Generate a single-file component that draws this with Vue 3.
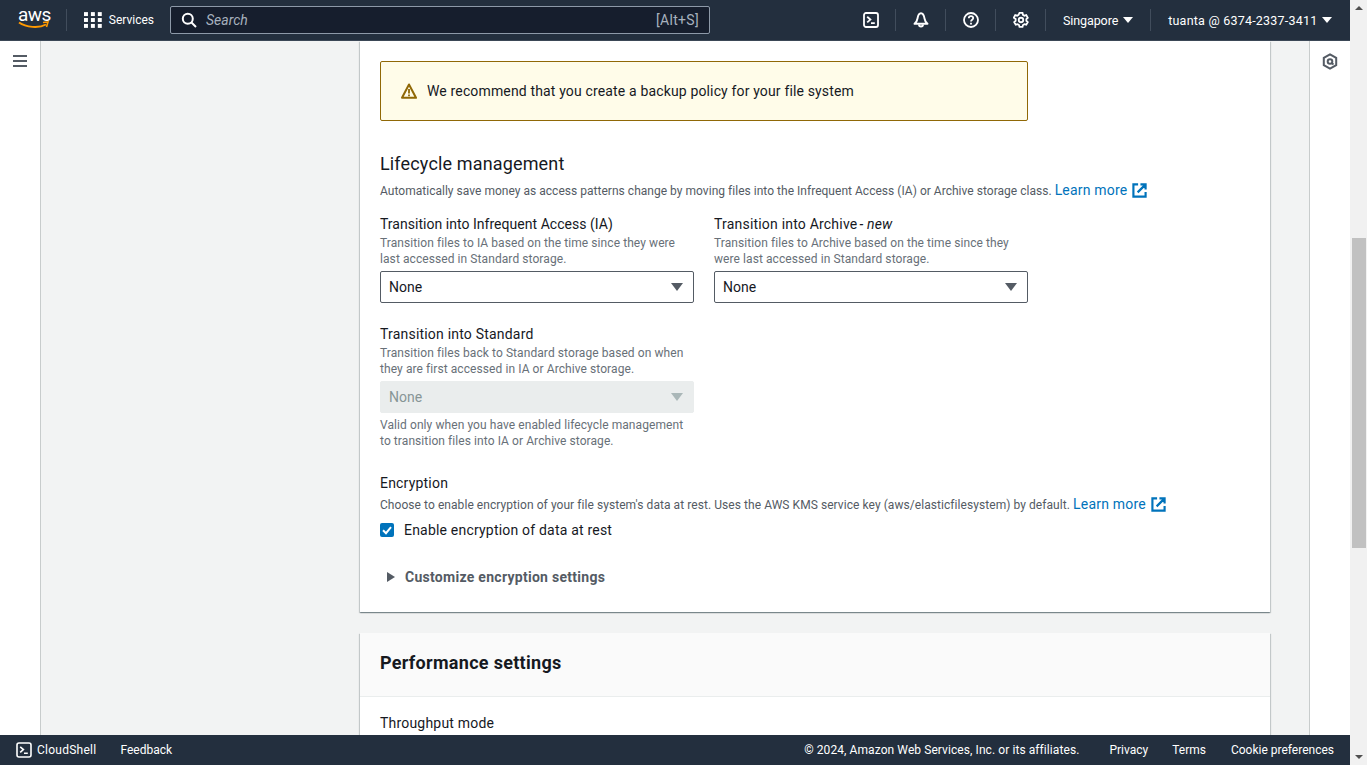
<script setup>
</script>

<template>
  <div class="page">
    <div class="viewport">
      <header class="topbar">
        <div class="logo">
          <span class="logo-text">aws</span>
          <svg class="swoosh" width="32" height="9" viewBox="0 0 32 9"><path d="M1 1.500C8 6.500 21 7.500 28 3.500" fill="none" stroke="#f90" stroke-width="2"/><path d="M25 1.500l5-.5-1.500 5" fill="none" stroke="#f90" stroke-width="1.600"/></svg>
        </div>
        <span class="tdiv first"></span>
        <div class="services">
          <svg width="18" height="18" viewBox="0 0 18 18" fill="#fff"><rect x="0" y="1" width="4" height="4"/><rect x="7" y="1" width="4" height="4"/><rect x="14" y="1" width="4" height="4"/><rect x="0" y="7" width="4" height="4"/><rect x="7" y="7" width="4" height="4"/><rect x="14" y="7" width="4" height="4"/><rect x="0" y="13" width="4" height="4"/><rect x="7" y="13" width="4" height="4"/><rect x="14" y="13" width="4" height="4"/></svg>
          <span>Services</span>
        </div>
        <div class="search">
          <svg width="16" height="16" viewBox="0 0 16 16" fill="none" stroke="#fff" stroke-width="2"><circle cx="6.800" cy="6.800" r="5"/><path d="M10.500 10.500L15 15"/></svg>
          <span class="search-ph">Search</span>
          <span class="search-key">[Alt+S]</span>
        </div>
        <div class="tools">
          <div class="tool first-tool"><svg width="16" height="16" viewBox="0 0 16 16" fill="none" stroke="#fff" stroke-width="1.800"><rect x="1" y="1" width="14" height="14" rx="2"/><path d="M4.200 4.800L7.400 7.600 4.200 10.400M8 11.200h3.800"/></svg></div>
          <span class="tdiv"></span>
          <div class="tool"><svg width="16" height="16" viewBox="0 0 16 16" fill="none" stroke="#fff" stroke-width="1.900"><path d="M1.500 11.800h13c-1.800-1.400-2.600-2.900-3-5.300C11 3.200 10 1.200 8 1.200S5 3.200 4.500 6.500c-.4 2.400-1.200 3.900-3 5.300z" stroke-linejoin="round"/><path d="M6 12.500a2 2 0 0 0 4 0"/></svg></div>
          <span class="tdiv"></span>
          <div class="tool"><svg width="16" height="16" viewBox="0 0 16 16" fill="none" stroke="#fff" stroke-width="1.800"><circle cx="8" cy="8" r="7"/><path d="M5.800 6.200C5.800 4.900 6.800 4.100 8 4.100s2.200.8 2.200 2c0 1.700-2.200 1.700-2.200 3.400"/><path d="M8 10.800v1.600"/></svg></div>
          <span class="tdiv"></span>
          <div class="tool"><svg width="16" height="16" viewBox="0 0 17 17" fill="none" stroke="#fff" stroke-width="1.900"><path d="M6.900 1h3.200l.5 2 1.500.9 2-.6 1.600 2.800-1.500 1.400v1.800l1.500 1.400-1.600 2.800-2-.6-1.500.9-.5 2H6.900l-.5-2-1.500-.9-2 .6-1.600-2.800 1.500-1.400V7.500L.8 6.100l1.600-2.800 2 .6 1.500-.9z"/><circle cx="8.500" cy="8.500" r="2.400"/></svg></div>
          <span class="tdiv"></span>
          <div class="menu region"><span>Singapore</span><i class="caret"></i></div>
          <span class="tdiv"></span>
          <div class="menu account"><span>tuanta @ 6374-2337-3411</span><i class="caret"></i></div>
        </div>
      </header>

      <div class="body">
        <aside class="rail left">
          <svg width="14" height="12" viewBox="0 0 14 12" fill="#545b64"><rect y="0" width="14" height="2"/><rect y="5" width="14" height="2"/><rect y="10" width="14" height="2"/></svg>
        </aside>
        <main class="center">
          <section class="card first-card">
            <div class="alert">
              <svg width="16" height="16" viewBox="0 0 16 16" fill="none"><path d="M8 1.500L15 14.800H1z" stroke="#906806" stroke-width="2" stroke-linejoin="round"/><path d="M8 6v4.500M8 11.600v1.600" stroke="#906806" stroke-width="1.800"/></svg>
              <span>We recommend that you create a backup policy for your file system</span>
            </div>
            <h3 class="title">Lifecycle management</h3>
            <p class="desc-row desc-life">Automatically save money as access patterns change by moving files into the Infrequent Access (IA) or Archive storage class. <a class="link">Learn more<svg width="15" height="15" viewBox="0 0 16 16" fill="none" stroke="#0073bb" stroke-width="2.300"><path d="M6.500 1.500H1.500v13h13v-5M9 1.500h5.500V7M14 2L6 10"/></svg></a></p>

            <div class="two-col">
              <div class="field">
                <div class="label">Transition into Infrequent Access (IA)</div>
                <div class="hint">Transition files to IA based on the time since they were last accessed in Standard storage.</div>
                <div class="select"><span>None</span><i class="sel-caret"></i></div>
              </div>
              <div class="field">
                <div class="label wide">Transition into Archive<em>- new</em></div>
                <div class="hint">Transition files to Archive based on the time since they were last accessed in Standard storage.</div>
                <div class="select"><span>None</span><i class="sel-caret"></i></div>
              </div>
            </div>

            <div class="field standard">
              <div class="label wide">Transition into Standard</div>
              <div class="hint">Transition files back to Standard storage based on when they are first accessed in IA or Archive storage.</div>
              <div class="select disabled"><span>None</span><i class="sel-caret"></i></div>
              <div class="hint after">Valid only when you have enabled lifecycle management to transition files into IA or Archive storage.</div>
            </div>

            <div class="label wide enc">Encryption</div>
            <p class="desc-row enc-desc">Choose to enable encryption of your file system's data at rest. Uses the AWS KMS service key (aws/elasticfilesystem) by default. <a class="link">Learn more<svg width="15" height="15" viewBox="0 0 16 16" fill="none" stroke="#0073bb" stroke-width="2.300"><path d="M6.500 1.500H1.500v13h13v-5M9 1.500h5.500V7M14 2L6 10"/></svg></a></p>
            <div class="check">
              <span class="box"><svg width="14" height="14" viewBox="0 0 14 14" fill="none" stroke="#fff" stroke-width="2"><path d="M3 7.200l3 3 5-6"/></svg></span>
              <span>Enable encryption of data at rest</span>
            </div>
            <div class="expander"><i class="tri"></i><span>Customize encryption settings</span></div>
          </section>

          <section class="card second-card">
            <div class="card-head">Performance settings</div>
            <div class="card-body"><div class="label wide">Throughput mode</div></div>
          </section>
        </main>
        <aside class="rail right">
          <svg width="16" height="17" viewBox="0 0 16 17" fill="none" stroke="#545b64" stroke-width="2"><path d="M8 1.300l6.200 3.500v7.400L8 15.700l-6.200-3.500V4.800z"/><circle cx="8" cy="8.500" r="2.300"/><path d="M9.500 10l2 1.500"/></svg>
        </aside>
      </div>

      <footer class="footer">
        <svg width="16" height="16" viewBox="0 0 16 16" fill="none" stroke="#fff" stroke-width="1.600"><rect x="1" y="1" width="14" height="14" rx="2"/><path d="M4.200 4.800L7.400 7.600 4.200 10.400M8 11.200h3.800"/></svg>
        <span class="f-shell">CloudShell</span>
        <span class="f-feedback">Feedback</span>
        <span class="f-copy">© 2024, Amazon Web Services, Inc. or its affiliates.</span>
        <span class="f-link f-privacy">Privacy</span>
        <span class="f-link f-terms">Terms</span>
        <span class="f-link">Cookie preferences</span>
      </footer>
    </div>
    <div class="scrollbar">
      <i class="arrow up"></i>
      <div class="track"><div class="thumb"></div></div>
      <i class="arrow down"></i>
    </div>
  </div>
</template>

<style>
html, body { margin: 0; overflow: hidden; }
</style>

<style scoped>
.page { display: flex; width: 1367px; height: 765px; overflow: hidden; font-family: Roboto, "Liberation Sans", sans-serif; font-size: 14px; color: #16191f; }
.viewport { width: 1350px; height: 765px; display: flex; flex-direction: column; }
.topbar { height: 40px; flex: none; background: #232f3e; border-bottom: 1px solid #5f6b7a66; display: flex; align-items: center; color: #fff; padding-left: 18px; }
.logo { width: 32px; height: 28px; position: relative; }
.logo-text { display: block; font-size: 19px; line-height: 17px; text-align: center; color: #fff; letter-spacing: -0.5px; }
.swoosh { position: absolute; left: 0; top: 15px; }
.tdiv { width: 1px; height: 22px; background: #414d5c; flex: none; }
.tdiv.first { margin-left: 16px; }
.services { display: flex; align-items: center; gap: 7px; margin-left: 17px; font-size: 12px; width: 70px; }
.search { margin-left: 16px; width: 540px; height: 28px; box-sizing: border-box; border: 1px solid #8d99a8; border-radius: 2px; background: #161e2d; display: flex; align-items: center; padding: 0 10px; }
.search-ph { margin-left: 9px; font-style: italic; color: #a7b1bd; font-size: 14px; }
.search-key { margin-left: auto; color: #a7b1bd; font-size: 14px; letter-spacing: .3px; }
.tools { display: flex; align-items: center; flex: 1; }
.tool { width: 49px; display: flex; justify-content: center; }
.first-tool { margin-left: 136px; }
.menu { display: flex; align-items: center; gap: 5px; font-size: 12.500px; }
.region { padding: 0 17px; letter-spacing: -.1px; }
.account { padding-left: 17px; letter-spacing: .22px; }
.caret { border-left: 5px solid transparent; border-right: 5px solid transparent; border-top: 6px solid #fff; }

.body { flex: 1; min-height: 0; display: flex; background: #f2f3f3; }
.rail { width: 41px; flex: none; background: #fff; display: flex; justify-content: center; align-items: flex-start; padding-top: 14px; box-sizing: border-box; }
.rail.left { border-right: 1px solid #c8cccc; }
.rail.right { border-left: 1px solid #c8cccc; padding-top: 12px; }
.center { flex: 1; min-width: 0; padding: 0 39px 0 319px; overflow: hidden; }
.card { background: #fff; box-shadow: 0 1px 1px 0 rgba(0,28,36,.3), 1px 1px 1px 0 rgba(0,28,36,.15), -1px 1px 1px 0 rgba(0,28,36,.15); }
.first-card { height: 571px; padding: 20px 20px 0; box-sizing: border-box; }
.second-card { margin-top: 21px; height: 200px; }
.alert { width: 648px; height: 60px; box-sizing: border-box; border: 1px solid #906806; border-radius: 2px; background: #fffce9; display: flex; align-items: center; gap: 10px; padding-left: 20px; line-height: 20px; letter-spacing: .15px; }
.title { margin: 32px 0 0; font-size: 18px; line-height: 22px; font-weight: 400; letter-spacing: .15px; }
.desc-row { margin: 5px 0 0; font-size: 12px; line-height: 20px; color: #545b64; white-space: nowrap; }
.desc-life { letter-spacing: .025px; }
.link { font-size: 14px; color: #0073bb; display: inline-flex; align-items: center; gap: 5px; letter-spacing: .2px; }
.link svg { margin-bottom: -1px; }
.two-col { display: grid; grid-template-columns: 314px 314px; gap: 20px; margin-top: 13px; }
.field { width: 314px; }
.label { font-size: 14px; line-height: 20px; letter-spacing: .03px; }
.label.wide { letter-spacing: .2px; }
.label em { font-style: italic; margin-left: 2px; }
.hint { font-size: 12px; line-height: 16px; color: #687078; margin-top: 1px; letter-spacing: .08px; }
.select { height: 32px; box-sizing: border-box; border: 1px solid #545b64; border-radius: 2px; margin-top: 4px; padding: 0 8px; display: flex; align-items: center; justify-content: space-between; background: #fff; line-height: 20px; }
.sel-caret { border-left: 6px solid transparent; border-right: 6px solid transparent; border-top: 8px solid #545b64; margin-right: 2px; }
.select.disabled { background: #eaeded; border-color: #eaeded; color: #879596; }
.select.disabled .sel-caret { border-top-color: #aab7b8; }
.standard { margin-top: 21px; }
.hint.after { margin-top: 4px; }
.enc { margin-top: 24px; letter-spacing: .3px; }
.enc-desc { margin-top: 1px; letter-spacing: .063px; }
.check { display: flex; align-items: center; gap: 10px; margin-top: 5px; line-height: 20px; letter-spacing: .2px; }
.box { width: 14px; height: 14px; background: #0073bb; border-radius: 2px; display: flex; }
.expander { display: flex; align-items: center; margin-top: 27px; margin-left: 7px; font-weight: 700; color: #545b64; line-height: 20px; gap: 10px; letter-spacing: .28px; }
.tri { border-top: 5px solid transparent; border-bottom: 5px solid transparent; border-left: 8px solid #545b64; }
.card-head { height: 64px; box-sizing: border-box; background: #fafafa; border-bottom: 1px solid #eaeded; padding-left: 20px; font-size: 18px; font-weight: 700; line-height: 60px; letter-spacing: .3px; }
.card-body { padding: 16px 20px; }

.footer { height: 30px; flex: none; background: #232f3e; color: #fff; display: flex; align-items: center; padding: 0 16px; font-size: 12px; }
.f-shell { margin-left: 5px; letter-spacing: .25px; }
.f-feedback { margin-left: 24px; }
.f-copy { margin-left: auto; letter-spacing: .08px; }
.f-link { margin-left: 25px; }
.f-privacy { margin-left: 30px; }
.f-terms { margin-left: 24px; }

.scrollbar { width: 17px; background: #f1f1f1; display: flex; flex-direction: column; align-items: center; }
.track { flex: 1; width: 100%; position: relative; }
.thumb { position: absolute; left: 2px; width: 14px; top: 221px; height: 310px; background: #c1c1c1; }
.arrow { flex: none; width: 0; }
.arrow.up { border-left: 4px solid transparent; border-right: 4px solid transparent; border-bottom: 4px solid #505050; height: 0; margin: 6px 0 7px; }
.arrow.down { border-left: 4px solid transparent; border-right: 4px solid transparent; border-top: 4px solid #505050; height: 0; margin: 7px 0 6px; }
</style>
